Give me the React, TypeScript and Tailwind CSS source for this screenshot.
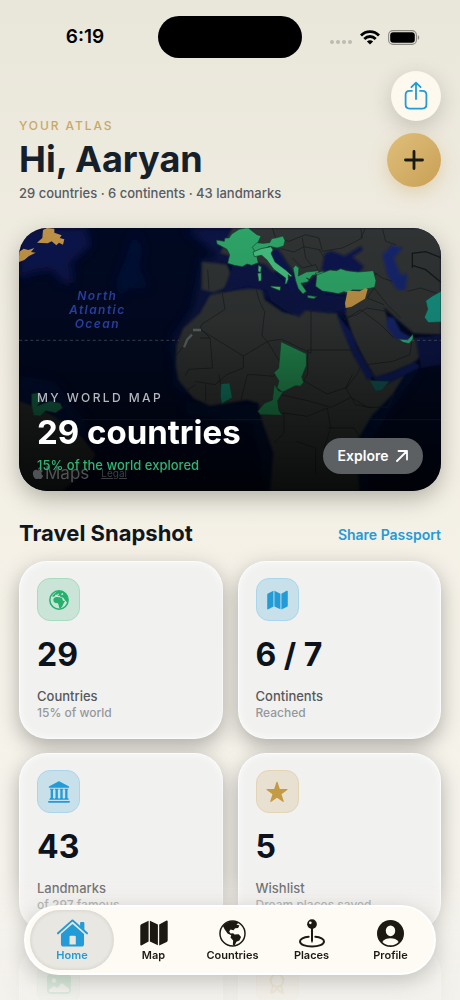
import type { ReactNode } from "react";
import { FaApple } from "react-icons/fa";

type IconProps = { className?: string };

function WifiIcon({ className }: IconProps) {
  return (
    <svg viewBox="0 0 20 15" className={className} fill="none" stroke="currentColor" strokeWidth="2.8">
      <path d="M1 5.4C6 .3 14 .3 19 5.4" />
      <path d="M4.3 8.9c3.3-3.2 8.1-3.2 11.4 0" />
      <path d="M10 14.6 6.9 11.4c1.8-1.6 4.4-1.6 6.2 0z" fill="currentColor" stroke="none" />
    </svg>
  );
}

function BatteryIcon({ className }: IconProps) {
  return (
    <svg viewBox="0 0 32 15" className={className}>
      <rect x=".6" y=".6" width="27.8" height="13.8" rx="4.4" fill="none" stroke="#8b8980" strokeWidth="1.1" />
      <rect x="2.2" y="2.2" width="24.6" height="10.6" rx="3" fill="#000" />
      <path d="M29.8 5.2c1.9.6 1.9 4 0 4.6z" fill="#8b8980" />
    </svg>
  );
}

function ShareIcon({ className }: IconProps) {
  return (
    <svg viewBox="0 0 24 30" className={className} fill="none" stroke="currentColor" strokeWidth="1.8" strokeLinecap="round" strokeLinejoin="round">
      <path d="M8 9.8H5.6c-2.6 0-4 1.4-4 4v9.8c0 2.6 1.4 4 4 4h12.8c2.6 0 4-1.4 4-4v-9.8c0-2.6-1.4-4-4-4H16" />
      <path d="M12 18V1.8M7.4 6.2 12 1.6l4.6 4.6" />
    </svg>
  );
}

function MapIcon({ className }: IconProps) {
  return (
    <svg viewBox="0 0 28 26" className={className} fill="currentColor">
      <path d="M8.600.8v20.800l-6.800 3.700c-.9.5-1.500.1-1.500-.8V5.900c0-.8.3-1.300 1-1.700z" />
      <path d="m9.900.8 8 3.700v20.700l-8-3.700z" />
      <path d="M19.200 4.600 26.100.8c.9-.5 1.600-.1 1.600.8v18.700c0 .8-.3 1.300-1 1.700l-7.500 3.500z" />
    </svg>
  );
}

function AmericasIcon({ className }: IconProps) {
  return (
    <svg viewBox="0 0 82 82" className={className} fill="currentColor">
      <circle cx="41" cy="41" r="38" fill="none" stroke="currentColor" strokeWidth="4.5" />
      <path d="M12 18C24 2 46 0 60 8l-7 6 9 3-4 7-9 1-5 6-9-2-4 6 4 6 8-1 4 4 13-1 7 9-5 10-9 4-6 12-5-3 1-13-8-9 2-7-11-5-9-13z" />
    </svg>
  );
}

function AfricaIcon({ className }: IconProps) {
  return (
    <svg viewBox="0 0 60 60" className={className} fill="currentColor">
      <circle cx="30" cy="30" r="27.5" fill="none" stroke="currentColor" strokeWidth="4.5" />
      <path d="M13 28c1-4 5-7 9-7l10 1 7 2 3 8 6 1-4 7-4 9-5 6h-4l-2-9-2-6-8-1-5-4z" />
      <path d="m10 17 9-9 8-5 14 1 11 9 5 14-2 11-7-7-5-8-8-2-3-4-6 1-4-2-5 3-6 2z" />
      <path d="m18 14 7 0 2-4 3 3-5 5-6 0zM36 12l5-3 2 4-4 3z" className="fill-[#c9e8d7]" />
    </svg>
  );
}

function ColumnsIcon({ className }: IconProps) {
  return (
    <svg viewBox="0 0 66 66" className={className} fill="currentColor">
      <path d="M31 1.5c1.5-.8 2.5-.8 4 0l27 14c3 1.600 2 5-1 5H5c-3 0-4-3.400-1-5z" />
      <path d="M6 23h11v3h-2v25h2v3H6v-3h2V26H6zM20.500 23h11v3h-2v25h2v3h-11v-3h2V26h-2zM35 23h11v3h-2v25h2v3H35v-3h2V26h-2zM49.500 23h11v3h-2v25h2v3h-11v-3h2V26h-2z" />
      <rect x="4" y="53" width="58" height="3.5" rx="1" />
      <rect x="0" y="60" width="66" height="5" rx="2.5" />
    </svg>
  );
}

function StarIcon({ className }: IconProps) {
  return (
    <svg viewBox="0 0 24 24" className={className} fill="currentColor" stroke="currentColor" strokeWidth="1.4" strokeLinejoin="round">
      <path d="m12 1.500 2.500 7.800h8.300l-6.700 4.900 2.600 8L12 17.300l-6.700 4.900 2.600-8-6.700-4.900h8.300z" />
    </svg>
  );
}

function HomeIcon({ className }: IconProps) {
  return (
    <svg viewBox="0 0 94 84" className={className} fill="currentColor">
      <path d="M3 43 44 6c2-2 4-2 6 0l41 37" fill="none" stroke="currentColor" strokeWidth="6" strokeLinecap="round" />
      <path d="M70 12c0-2 1-3 3-3h7c2 0 3 1 3 3v22L70 22z" />
      <path fillRule="evenodd" d="M12 45 45 16c1.500-1 2.500-1 4 0l33 29v30c0 5-3 8-8 8H20c-5 0-8-3-8-8zM38 53v24h19V53c0-2-1-3-3-3H41c-2 0-3 1-3 3z" />
    </svg>
  );
}

function PinIcon({ className }: IconProps) {
  return (
    <svg viewBox="0 0 78 86" className={className}>
      <path d="M29 53C14 54 3 60 3 67c0 9 16 15 36 15s36-6 36-15c0-7-11-13-26-14" fill="none" stroke="currentColor" strokeWidth="6" strokeLinecap="round" />
      <path d="M36 26h6v38l-2 7h-2l-2-7z" fill="currentColor" />
      <circle cx="39" cy="15" r="14.5" fill="currentColor" />
      <circle cx="34" cy="11" r="4" fill="#fdfbf4" />
    </svg>
  );
}

function ProfileIcon({ className }: IconProps) {
  return (
    <svg viewBox="0 0 80 80" className={className}>
      <circle cx="40" cy="40" r="40" fill="currentColor" />
      <ellipse cx="40" cy="32" rx="14" ry="16" fill="#fdfbf4" />
      <path d="M16 65c5-8 14-11 24-11s19 3 24 11c-6 7-15 10-24 10s-18-3-24-10z" fill="#fdfbf4" />
    </svg>
  );
}

function PhotoIcon({ className }: IconProps) {
  return (
    <svg viewBox="0 0 24 20" className={className}>
      <rect width="24" height="20" rx="4" fill="currentColor" />
      <circle cx="7" cy="6.5" r="2.3" fill="#f2f3ef" />
      <path d="m2 16 5-4 3 2 5-5 7 6v1.500c0 1-.6 1.500-1.500 1.500h-17C2.500 18 2 17 2 16z" fill="#f2f3ef" />
    </svg>
  );
}

function RibbonIcon({ className }: IconProps) {
  return (
    <svg viewBox="0 0 18 22" className={className} fill="none" stroke="currentColor" strokeWidth="2" strokeLinejoin="round">
      <circle cx="9" cy="7.5" r="6.3" />
      <path d="m5 13-2 7 3.500-1.500L9 15l2.500 3.500L15 20l-2-7" />
    </svg>
  );
}

function WorldMap() {
  return (
    <svg viewBox="0 0 1266 789" preserveAspectRatio="xMidYMid slice" className="absolute inset-0 size-full" aria-hidden="true">
      <defs>
        <filter id="shelf" x="-20%" y="-20%" width="140%" height="140%">
          <feGaussianBlur stdDeviation="14" />
        </filter>
        <filter id="coast" x="-5%" y="-5%" width="110%" height="110%">
          <feGaussianBlur stdDeviation="3" />
        </filter>
        <linearGradient id="shade" x1="0" y1="0" x2="0" y2="1">
          <stop offset="0" stopColor="#000" stopOpacity="0.04" />
          <stop offset=".35" stopColor="#000" stopOpacity=".14" />
          <stop offset="1" stopColor="#000" stopOpacity=".78" />
        </linearGradient>
      </defs>
      <rect width="1266" height="789" fill="#020a24" />

      {/* shallow water */}
      <g filter="url(#shelf)" fill="#0f1c58">
        <path d="M0 0h200l15 50-60 55 10 60-30 0-40-40-60 10-35 20z" opacity=".8" />
        <path d="M345 10l25 50-10 60 30 60-60 0-30 30-10-50 30-70z" opacity=".4" />
        <path d="M500 0h260v120H640L560 50z" opacity=".7" />
        <path d="M550 90h60v110l-50 60-60 50-20 120 40 90-50-50-10-140 60-90z" opacity=".55" />
        <path d="M610 200l40-80h200l160 90v50l-170 10-100-60z" opacity=".7" />
        <path d="M0 440l110 20 90 120-10 120-80 90H0z" opacity=".3" />
        <path d="M500 520l220 10 50 140v120h-30l-40-200-200-30z" opacity=".2" />
        <path d="M1040 440l140-50 30 20-110 160-60 90 10 130h-40z" opacity=".35" />
      </g>

      {/* land */}
      <g fill="#323635" filter="url(#coast)">
        <path d="M548 101l75 8 15 32-20 40-35 12-35-8z" />
        <path d="M573 201l50-11 70-8 35 2 10 32 55 37 30 5 15-22 35 10 60 5 20 5 25 50 25 70 15 20 42 65 60-6 37-15-37 60-60 61-50 85 12 143H753l10-113-35-100-10-50-35-10-50 8-60 9-50-22-45-55-8-45 3-60 20-50 50-45z" />
        <path d="M640 0h626v321l-83-5-58-50-30-28 20 60 40 40 55-10 20 20-15 30-35 30-110 46-30-50-40-80-20-68 3-60-130-10-60-60-40 10-70-40-80-20z" />
        <path d="M0 520l60 20 70 40 60 50 40 50-40 60-60 49H0z" fill="#262b2b" />
      </g>

      {/* inland seas */}
      <g fill="#101b5c" filter="url(#coast)">
        <path d="M640 115l55-15 45 10 60 60 15 20 30-10 35-30 20-20 12 30 8 42 60 4 0 36-50 12-70-8-20 20-45-20-40-30-10-30-60-15-70 20z" fill="#0b1345" />
        <path d="M747 68l30-6 40 60 20 25 0 35-20 10-30-60-30-35z" fill="#0e184f" />
        <path d="M907 127l10-50 20-8 40 15 50-30 4 12-30 20 35 30-16 18-50-8-50 6z" fill="#0e184f" />
        <path d="M1090 80l30-28 30 8-25 30 20 50 20-2-5 48-25 0-30-44z" fill="#17266e" />
        <path d="M1105 265l20 5 20 40 35 20-15 14-40-14-22-35z" fill="#17266e" />
        <path d="M955 260l40 50 25 60 45 75-20 10-40-70-30-70z" />
        <path d="M1063 448l60-15 65-30 15 15-120 60z" />
        <path d="M1190 330l76-10v90l-60 10z" fill="#0a1348" />
      </g>

      {/* borders */}
      <g fill="none" stroke="#1a1f1f" strokeWidth="2.4" strokeLinejoin="round">
        <path d="M566 125l4 60M610 196l8 48-70 45-5 15 130 80 75-45 40-5 88 42V248M712 186l10 35 15 30-8 72 20 22M543 300l30 30 8 90-72 4-10 20M573 330l-30 0M673 382v38l-50 20-35 30-60-10M498 350l-25 30M748 345l37 60-20 40-60-5-20 0-20 80M600 440l10 60M560 470l0 50M530 470l-30 20M866 378l0-12h150M866 378v60l-12 20 70 40 60-20 30-40 15-30M786 500l80 18 70 20 60-30 50 30 60 0 20-40M735 555l60 0 70 10 60-25 10 60-20 60 20 70M795 555l0 60-30 30M830 640l60 20 0 80M925 600l80 0 20 30M1000 440l-20 40 30 50 50 10" />
        <path d="M760 0l10 30 40 10 50-20 40 10 10 40 60-10 60-30-5-30M785 62l40 10 30-16 50 10M820 90l30 30 40-10 10 20M850 30l10 60 20 25M900 65l20 30M1040 0l-15 30M1090 0l10 40 30 10M1060 130l30 20 30 10M1065 180l40 50 40 40M1065 180l-20 30 50 20M983 270l30-10 30-20 60 10 20 10M975 275l50-30 60 45 40 40M1165 190l40-10 60 20M1180 330l-8 50-50 20-80 10M790 80l30 60M1045 155l30-20" />
      </g>
      <path d="M1180 120v-44l40-5 46 18M1180 112l40 13 46 38" fill="none" stroke="#141818" strokeWidth="4" />

      {/* visited countries */}
      <g stroke="#17402f" strokeWidth="2" strokeLinejoin="round">
        <path d="M592 36l24 4 2-10 12 0 8-12 22-14 20-4h8l26 20 12 4-10 22 4 24-6 18 4 16-20 8-14-4-14 8-24-4-20-6 6-26-8-16-14-8-16-8z" fill="#2faa6b" />
        <path d="M700 58l14-14 18 2 20-2 6-12 20-4 14-4 6 14-4 16-20 6-22-5-22 10-22 6z" fill="#2faa6b" />
        <path d="M702 72l24-10 30-6 6 10-6 10 12 26 32 24 20 18-6 2-6-6 0 14-6 14-4 0 2-18-36-26-20-28-16-14-22 4z" fill="#47c383" />
        <path d="M755 174l30 2-2 12-26-10zM718 112l9 4-2 18-8-4zM716 136l11-2 0 24-8 2z" fill="#47c383" />
        <path d="M822 120l8-8 10 8-2 24 24-12 36-4 4 10-22 4-14 20-20 4 16 24-10 8-14-16-8-24z" fill="#2faa6b" />
        <path d="M866 202l28 4-10 6-18-3zM888 136l24-6 8 8-20 8z" fill="#2faa6b" />
        <path d="M893 141l40-15 20 2 12-6 18 6 34 4 46-4 8 30-4 20-20 4-20 4-27 0-13 9-12-4-17 6-22-4-26-4-20-14z" fill="#2faa6b" />
        <path d="M786 341l76 36 0 36-14 34 6 16-10 12-14-2-40 20-16-14 6-20-15-25 14-14z" fill="#259254" />
        <path d="M766 468l12 20 14 4-16 26 4 30 10 14-66-2-8-10 20-24 24-10z" fill="#1f8a50" />
        <path d="M606 467l26-2 8 44-32 18-4-22z" fill="#137e68" />
        <path d="M1266 190l-26 14-20 14 6 26-10 24 12 16 38-2z" fill="#169484" />
        <path d="M1138 333l28 2 16-16 0 14-12 14-18-4z" fill="#2ebd86" />
        <path d="M1052 458l58 2-20 26-20 4z" fill="#155a58" />
        <path d="M38 498l22-4 6 26-12 14 40-14 30 6 6 14-20 14-30-6-16 16-20-2-6-30z" fill="#156a4a" />
      </g>
      <g fill="#c69848">
        <path d="M986 188l36 2 18-10 6 4-8 28-40 24-18 4-2-14z" />
        <path d="M72 6l12-6 22 2 0 12 22 8-6 8 14 4-4 16-12-6-8 8-14-12-12 6-32-2 16-14z" />
        <path d="M0 72l14-10 14 4 18-6-10 12 14 2-20 10-14 12-16 6z" />
      </g>

      <g fill="none" stroke="#6f7778" strokeWidth="3">
        <path d="M0 337h480M1160 337h106" strokeDasharray="9 8" opacity=".6" />
        <path d="M495 358l10-24 14-14M522 306h24" strokeWidth="7" opacity=".8" />
        <path d="M190 575h540M1055 575h211" strokeWidth="2" opacity=".35" />
      </g>
      <g fill="none" stroke="#0d1742" strokeWidth="4" opacity=".7">
        <path d="M862 150l20 10-14 12 20 8-10 20M852 170l14 16" />
      </g>
      <rect width="1266" height="789" fill="url(#shade)" />
    </svg>
  );
}

type Stat = {
  value: string;
  label: string;
  note: string;
  tile: string;
  icon: ReactNode;
};

const stats: Stat[] = [
  {
    value: "29",
    label: "Countries",
    note: "15% of world",
    tile: "border-[#a5dcc0] bg-[#cae5d8] text-[#25b06d]",
    icon: <AfricaIcon className="size-5" />,
  },
  {
    value: "6 / 7",
    label: "Continents",
    note: "Reached",
    tile: "border-[#a9d6ea] bg-[#c8e0ea] text-[#229bd6]",
    icon: <MapIcon className="h-5 w-[21px]" />,
  },
  {
    value: "43",
    label: "Landmarks",
    note: "of 297 famous",
    tile: "border-[#a9d6ea] bg-[#c8e0ea] text-[#229bd6]",
    icon: <ColumnsIcon className="size-[22px]" />,
  },
  {
    value: "5",
    label: "Wishlist",
    note: "Dream places saved",
    tile: "border-[#e3d4b4] bg-[#e8e1d1] text-[#c59a45]",
    icon: <StarIcon className="size-[22px]" />,
  },
];

const cardClass =
  "rounded-[28px] border border-white/80 bg-[#f1f1f0] px-[17px] pt-4 shadow-[0_7px_20px_rgba(50,50,48,0.36),inset_0_0_8px_rgba(255,255,255,0.7)]";
const tileClass = "flex size-[43px] items-center justify-center rounded-[13px] border";

function StatCard({ stat }: { stat: Stat }) {
  return (
    <div className={`${cardClass} pb-[17px]`}>
      <div className={`${tileClass} ${stat.tile}`}>{stat.icon}</div>
      <p className="mt-3.5 text-[32px] leading-10 font-bold text-[#0d131c]">{stat.value}</p>
      <p className="mt-3 text-[13px] leading-[18px] font-medium text-[#55585c]">{stat.label}</p>
      <p className="text-xs leading-4 font-medium whitespace-nowrap text-[#96979b]">{stat.note}</p>
    </div>
  );
}

const tabs = [
  { label: "Home", icon: <HomeIcon className="h-7 w-[31px]" />, active: true },
  { label: "Map", icon: <MapIcon className="h-[26px] w-7" />, active: false },
  { label: "Countries", icon: <AmericasIcon className="size-[27px]" />, active: false },
  { label: "Places", icon: <PinIcon className="h-[29px] w-[26px]" />, active: false },
  { label: "Profile", icon: <ProfileIcon className="size-[27px]" />, active: false },
];

export default function App() {
  return (
    <div className="relative h-screen overflow-hidden bg-linear-to-b from-[#e9e6da] via-[#f3efe4] via-40% to-[#f7f5ef] font-['Inter',sans-serif] text-[#141c26]">
      <div className="grid grid-cols-[1fr_144px_1fr] items-center pt-4">
        <p className="pl-3 text-center text-[19px] font-semibold text-black">6:19</p>
        <div className="h-[42px] rounded-full bg-black" />
        <div className="flex items-center justify-end gap-2 pr-10 text-black">
          <div className="flex gap-0.5 pt-2.5">
            <i className="size-1 rounded-full bg-[#bdbab0]" />
            <i className="size-1 rounded-full bg-[#bdbab0]" />
            <i className="size-1 rounded-full bg-[#bdbab0]" />
            <i className="size-1 rounded-full bg-[#bdbab0]" />
          </div>
          <WifiIcon className="h-[15px] w-5" />
          <BatteryIcon className="h-[15px] w-8" />
        </div>
      </div>

      <main className="px-[19px] pt-[13px]">
        <header className="flex items-end justify-between">
          <div>
            <p className="text-xs leading-4 font-medium tracking-[0.16em] text-[#c9a864]">YOUR ATLAS</p>
            <h1 className="mt-1 text-4xl leading-[42px] font-bold text-[#16202a]">Hi, Aaryan</h1>
            <p className="mt-1 text-[13px] leading-[18px] font-medium text-[#565b64]">
              29 countries · 6 continents · 43 landmarks
            </p>
          </div>
          <div className="flex flex-col items-end gap-3 pb-[15px]">
            <button
              type="button"
              aria-label="Share"
              className="flex size-[50px] items-center justify-center rounded-full bg-[#fdf9ef] text-[#229bd6] shadow-[0_6px_20px_rgba(60,58,50,0.22)]"
            >
              <ShareIcon className="h-[30px] w-6" />
            </button>
            <button
              type="button"
              aria-label="Add"
              className="flex size-[54px] items-center justify-center rounded-full bg-linear-to-br from-[#dfbf7b] to-[#c9a055] text-[#1b1a12] shadow-[0_6px_18px_rgba(201,160,85,0.35)]"
            >
              <svg viewBox="0 0 20 20" className="size-5" stroke="currentColor" strokeWidth="2.8" strokeLinecap="round">
                <path d="M10 1.500v17M1.500 10h17" />
              </svg>
            </button>
          </div>
        </header>

        <section className="relative mt-[26px] flex h-[263px] items-end justify-between overflow-hidden rounded-[28px] px-[18px] pb-[17px] shadow-[0_8px_22px_rgba(60,58,50,0.34)]">
          <WorldMap />
          <p className="absolute top-[61px] left-[50px] text-center text-xs leading-[14px] font-semibold tracking-[0.12em] text-[#263f9c] italic">
            North
            <br />
            Atlantic
            <br />
            Ocean
          </p>
          <div className="absolute bottom-2 left-3 flex items-center text-[#505355]">
            <FaApple className="size-3.5" />
            <span className="text-[17px] leading-5">Maps</span>
            <a href="#legal" className="ml-3 text-[10px] text-[#3c4043] underline">
              Legal
            </a>
          </div>
          <div className="relative">
            <p className="text-xs leading-4 font-medium tracking-[0.2em] text-[#b4b7be]">MY WORLD MAP</p>
            <p className="mt-1.5 text-[33px] leading-10 font-bold text-white">29 countries</p>
            <p className="mt-1 text-[13px] leading-[18px] font-medium text-[#2fb573]">15% of the world explored</p>
          </div>
          <button
            type="button"
            className="relative flex h-9 w-[100px] items-center justify-center gap-2 rounded-full bg-[#5d6063] text-sm font-semibold text-white"
          >
            Explore
            <svg viewBox="0 0 12 12" className="size-3" fill="none" stroke="currentColor" strokeWidth="1.8" strokeLinecap="round" strokeLinejoin="round">
              <path d="M1 11 11 1M2.500 1H11v8.500" />
            </svg>
          </button>
        </section>

        <section className="mt-7">
          <div className="flex items-center justify-between">
            <h2 className="text-[22px] leading-7 font-bold text-[#10161d]">Travel Snapshot</h2>
            <a href="#passport" className="pt-1 text-sm font-semibold text-[#229bd6]">
              Share Passport
            </a>
          </div>
          <div className="mt-3.5 grid grid-cols-2 gap-x-[15px] gap-y-3.5">
            {stats.map((stat) => (
              <StatCard key={stat.label} stat={stat} />
            ))}
            <div className={`${cardClass} h-[178px]`}>
              <div className={`${tileClass} border-[#a5dcc0] bg-[#cae5d8] text-[#25b06d]`}>
                <PhotoIcon className="h-5 w-6" />
              </div>
            </div>
            <div className={`${cardClass} h-[178px]`}>
              <div className={`${tileClass} border-[#e3d4b4] bg-[#e8e1d1] text-[#c59a45]`}>
                <RibbonIcon className="h-[22px] w-[18px]" />
              </div>
            </div>
          </div>
        </section>
      </main>

      <div className="pointer-events-none fixed inset-x-0 bottom-0 h-[130px] bg-linear-to-b from-[#f3f1ec]/0 via-[#f3f1ec]/80 via-60% to-[#f3f1ec]/90" />

      <nav className="fixed inset-x-6 bottom-[25px] flex h-[70px] items-center rounded-full border-2 border-white bg-[#fdfbf4] px-1 shadow-[0_6px_20px_rgba(60,58,50,0.25)]">
        {tabs.map((tab) => (
          <a
            key={tab.label}
            href={`#${tab.label.toLowerCase()}`}
            className={`flex h-[60px] flex-auto flex-col items-center rounded-full pt-2 text-[11px] leading-[14px] font-semibold ${
              tab.active
                ? "basis-[84px] bg-[#e9e7e1] text-[#229bd6] shadow-[inset_0_0_4px_rgba(0,0,0,0.12)]"
                : "basis-[79px] text-[#1b1912]"
            }`}
          >
            <span className="flex h-[30px] items-center">{tab.icon}</span>
            <span>{tab.label}</span>
          </a>
        ))}
      </nav>
    </div>
  );
}
